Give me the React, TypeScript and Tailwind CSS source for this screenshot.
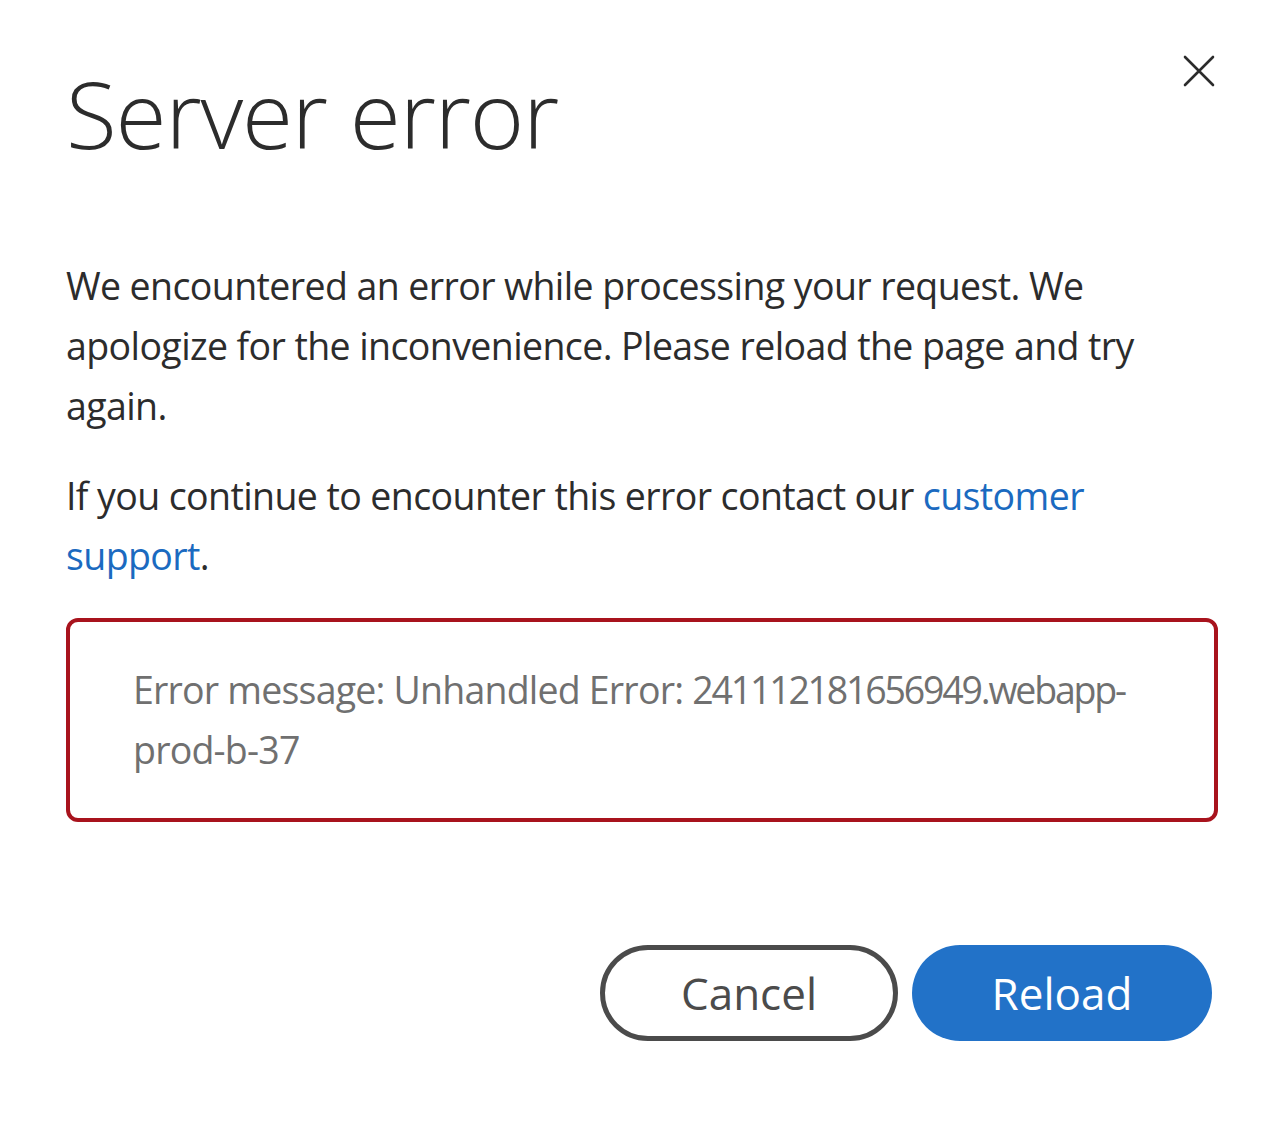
export default function App() {
  return (
    <div
      className="relative min-h-[1126px] w-[1284px] bg-white px-[66px] text-[#2c2c2c]"
      style={{ fontFamily: '"Open Sans", "Liberation Sans", sans-serif' }}
    >
      <button className="absolute right-[64px] top-[50px] p-1 text-[#2c2c2c]" aria-label="Close">
        <svg width="34" height="34" viewBox="0 0 34 34" fill="none" stroke="currentColor" strokeWidth="2.6" strokeLinecap="round">
          <path d="M3 3 L31 31 M31 3 L3 31" />
        </svg>
      </button>

      <h1 className="pt-[58px] text-[93px] font-light leading-[110px] tracking-[-1.2px]">Server error</h1>

      <div className="mt-[88px] text-[37.5px] leading-[60px] tracking-[-0.6px]">
        <p>
          We encountered an error while processing your request. We apologize for the inconvenience. Please reload the
          page and try again.
        </p>
        <p className="mt-[30px]">
          If you continue to encounter this error contact our{" "}
          <a href="#" className="text-[#1b6ac0]">
            customer support
          </a>
          .
        </p>
      </div>

      <div className="mt-[32px] rounded-[12px] border-[4px] border-[#a8131d] py-[38px] pl-[63px] pr-[20px] text-[37.5px] leading-[60px] tracking-[-0.8px] text-[#707070]">
        <div className="whitespace-nowrap">
          Error message: Unhandled Error: <span className="tracking-[-2.2px]">241112181656949.webapp-</span>
        </div>
        <div className="whitespace-nowrap">prod-b-37</div>
      </div>

      <div className="mt-[123px] flex justify-end gap-[14px] pr-[6px]">
        <button className="flex h-[96px] w-[298px] items-center justify-center rounded-full border-[5px] border-[#4b4b4b] text-[44px] text-[#4b4b4b]">
          Cancel
        </button>
        <button className="flex h-[96px] w-[300px] items-center justify-center rounded-full bg-[#2272c8] text-[44px] text-white">
          Reload
        </button>
      </div>
    </div>
  )
}
